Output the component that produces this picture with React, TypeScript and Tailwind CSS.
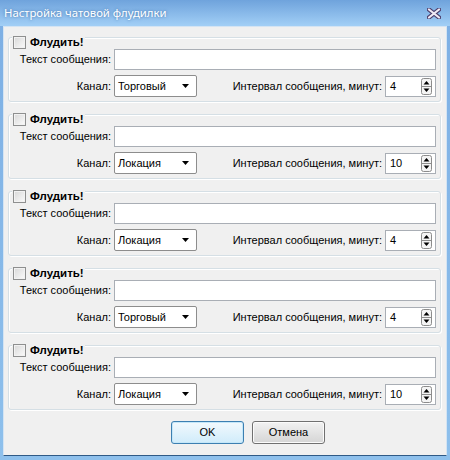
import React from "react";

interface FloodSlot {
  channel: string;
  interval: number;
}

const slots: FloodSlot[] = [
  { channel: "Торговый", interval: 4 },
  { channel: "Локация", interval: 10 },
  { channel: "Локация", interval: 4 },
  { channel: "Торговый", interval: 4 },
  { channel: "Локация", interval: 10 },
];

function CloseGlyph() {
  return (
    <svg width="14" height="11" viewBox="0 0 14 11">
      <path d="M2 1.5 L12 9.5 M12 1.5 L2 9.5" stroke="#4b3d6b" strokeWidth="4.2" strokeLinecap="round" />
      <path d="M2 1.5 L12 9.5 M12 1.5 L2 9.5" stroke="#efeaf6" strokeWidth="2.2" strokeLinecap="round" />
    </svg>
  );
}

function SpinArrows() {
  return (
    <svg width="11" height="17" viewBox="0 0 11 17">
      <rect x="0.5" y="0.5" width="10" height="16" rx="2" fill="#f4f4f4" stroke="#8c8c8c" />
      <line x1="1" y1="8.5" x2="10" y2="8.5" stroke="#8c8c8c" />
      <path d="M5.5 3 L8.5 6.5 L2.5 6.5 Z" fill="#000" />
      <path d="M2.5 10.5 L8.5 10.5 L5.5 14 Z" fill="#000" />
    </svg>
  );
}

function Checkbox() {
  return (
    <div className="h-[13px] w-[13px] border border-[#8e8f8f] bg-gradient-to-br from-[#d8d8d8] to-[#fbfbfb] shadow-[inset_0_0_0_1px_#f2f2f2]" />
  );
}

function FloodGroup({ slot }: { slot: FloodSlot }) {
  return (
    <div className="flex flex-col rounded-[3px] border border-[#d5dfe5] pr-[4px] pb-[4px] shadow-[inset_1px_1px_0_#fff,1px_1px_0_#fff]">
      {/* заголовок группы поверх рамки */}
      <div className="-mt-[2px] ml-[3px] flex h-[13px] w-fit items-center gap-[4px] bg-[#f0f0f0] px-[1px]">
        <Checkbox />
        <span className="text-[11.5px] font-bold leading-none">Флудить!</span>
      </div>

      <div className="flex items-center gap-[3px]">
        <span className="w-[102px] text-right">Текст сообщения:</span>
        <div className="h-[21px] flex-1 border border-[#a9aeb5] bg-white" />
      </div>

      <div className="mt-[5px] flex h-[22px] items-center">
        <span className="w-[102px] text-right">Канал:</span>
        <div className="ml-[3px] flex h-[22px] w-[83px] items-center justify-between rounded-[2px] border border-[#8d8d8d] bg-white pr-[7px] pl-[3px]">
          <span>{slot.channel}</span>
          <svg width="7" height="4" viewBox="0 0 7 4">
            <path d="M0 0 L7 0 L3.5 4 Z" fill="#000" />
          </svg>
        </div>
        <span className="ml-auto">Интервал сообщения, минут:</span>
        <div className="ml-[3px] flex h-[21px] w-[51px] items-center justify-between border border-[#a9aeb5] bg-white pr-[3px] pl-[4px]">
          <span>{slot.interval}</span>
          <SpinArrows />
        </div>
      </div>
    </div>
  );
}

export default function App() {
  return (
    <div className="flex h-[460px] w-[450px] flex-col bg-gradient-to-b from-[#7dafe4] to-[#8ec0ec] font-['Liberation_Sans',Arial,sans-serif] text-[11px] text-black">
      {/* заголовок окна */}
      <div className="flex h-[26px] shrink-0 items-center justify-between bg-gradient-to-b from-[#6fa3dc] to-[#a2cff6] pr-[9px] pl-[4px]">
        <span className="font-['Noto_Sans',sans-serif] text-[11.3px] text-white [text-shadow:0_0_3px_#3f70a8]">
          Настройка чатовой флудилки
        </span>
        <CloseGlyph />
      </div>

      <div className="mx-[3px] mb-[4px] flex flex-1 flex-col border border-[#d4e4f3] border-b-[#2f5a86] bg-[#f0f0f0] pt-[10px] pr-[5px] pl-[4px]">
        <div className="flex flex-col gap-[12px]">
          {slots.map((slot, i) => (
            <FloodGroup key={i} slot={slot} />
          ))}
        </div>

        <div className="mt-[11px] flex gap-[8px] pl-[163px]">
          <button className="h-[23px] w-[73px] rounded-[3px] border border-[#3c7fb1] bg-gradient-to-b from-[#f2f9fd] to-[#d0ecfb] shadow-[inset_0_0_0_1px_#c4e7f9]">
            OK
          </button>
          <button className="h-[23px] w-[73px] rounded-[3px] border border-[#707070] bg-gradient-to-b from-[#f2f2f2] to-[#d5d5d5] shadow-[inset_0_0_0_1px_#fbfbfb]">
            Отмена
          </button>
        </div>
      </div>
    </div>
  );
}
